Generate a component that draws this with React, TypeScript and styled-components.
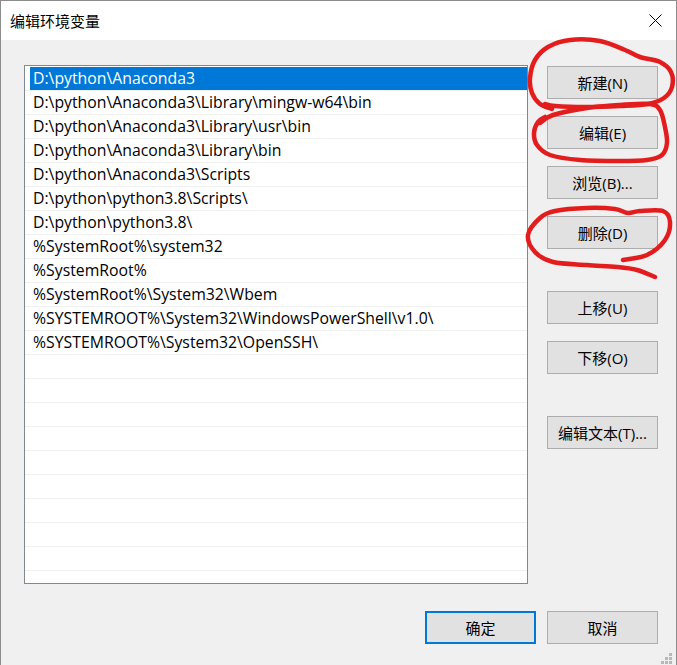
import * as React from "react";
import styled, { createGlobalStyle } from "styled-components";

const GlobalStyle = createGlobalStyle`
  html, body {
    margin: 0;
    padding: 0;
    background: #f0f0f0;
  }
  body {
    font-family: "Open Sans", "Noto Sans CJK SC", sans-serif;
  }
`;

const Window = styled.div`
  position: relative;
  width: 677px;
  height: 665px;
  box-sizing: border-box;
  border: 1px solid #8c8c8c;
  border-bottom: none;
  background: #f0f0f0;
  display: flex;
  flex-direction: column;
  overflow: hidden;
`;

const TitleBar = styled.div`
  height: 39px;
  flex: none;
  background: #ffffff;
  display: flex;
  align-items: center;
  justify-content: space-between;
  padding: 0 14px 0 9px;
  font-size: 15px;
  color: #000;
`;

const Body = styled.div`
  display: flex;
  gap: 19px;
  padding: 25px 18px 0 23px;
`;

const ListBox = styled.div`
  width: 504px;
  height: 519px;
  box-sizing: border-box;
  border: 1px solid #828790;
  background: #ffffff;
  padding-top: 1px;
  overflow: hidden;
`;

const Row = styled.div`
  height: 24px;
  box-sizing: border-box;
  border-bottom: 1px solid #f0f0f0;
  padding-left: 5px;
  display: flex;
`;

const RowLabel = styled.span<{ $selected?: boolean }>`
  flex: 1;
  padding-left: 3px;
  line-height: 23px;
  font-size: 15.8px;
  white-space: nowrap;
  color: ${(p) => (p.$selected ? "#ffffff" : "#000000")};
  background: ${(p) => (p.$selected ? "#0078d7" : "transparent")};
`;

const SideColumn = styled.div`
  display: flex;
  flex-direction: column;
  padding-top: 1px;
`;

const Button = styled.button<{ $primary?: boolean; $gap?: number }>`
  width: 111px;
  height: 33px;
  box-sizing: border-box;
  margin: ${(p) => (p.$gap ?? 0)}px 0 0 0;
  padding: 0;
  background: #e1e1e1;
  border: ${(p) => (p.$primary ? "2px solid #0078d7" : "1px solid #adadad")};
  font-family: "Open Sans", "Noto Sans CJK SC", sans-serif;
  font-size: 15px;
  color: #000;
  cursor: default;
`;

const Footer = styled.div`
  display: flex;
  justify-content: flex-end;
  gap: 11px;
  padding: 27px 18px 0 0;
`;

const Overlay = styled.svg`
  position: absolute;
  left: -1px;
  top: -1px;
  pointer-events: none;
`;

const Grip = styled.svg`
  position: absolute;
  right: 4px;
  bottom: 1px;
`;

const paths = [
  "D:\\python\\Anaconda3",
  "D:\\python\\Anaconda3\\Library\\mingw-w64\\bin",
  "D:\\python\\Anaconda3\\Library\\usr\\bin",
  "D:\\python\\Anaconda3\\Library\\bin",
  "D:\\python\\Anaconda3\\Scripts",
  "D:\\python\\python3.8\\Scripts\\",
  "D:\\python\\python3.8\\",
  "%SystemRoot%\\system32",
  "%SystemRoot%",
  "%SystemRoot%\\System32\\Wbem",
  "%SYSTEMROOT%\\System32\\WindowsPowerShell\\v1.0\\",
  "%SYSTEMROOT%\\System32\\OpenSSH\\",
];

const sideButtons = [
  { label: "新建(N)", gap: 0 },
  { label: "编辑(E)", gap: 17 },
  { label: "浏览(B)...", gap: 17 },
  { label: "删除(D)", gap: 17 },
  { label: "上移(U)", gap: 42 },
  { label: "下移(O)", gap: 17 },
  { label: "编辑文本(T)...", gap: 42 },
];

// hand-drawn marker loops, window coordinates
const loops: number[][][] = [
  [[552, 109], [540, 104], [532, 93], [530, 78], [535, 60], [548, 47], [570, 40], [600, 41], [625, 50], [640, 57], [660, 62], [671, 72], [672, 87], [664, 98], [648, 104], [620, 106], [585, 107], [555, 106], [545, 104]],
  [[540, 123], [553, 115], [587, 108], [620, 105], [650, 104], [660, 110], [665, 127], [667, 143], [662, 155], [647, 160], [620, 161], [580, 160], [550, 155], [537, 145], [534, 133], [538, 122], [545, 117]],
  [[623, 260], [647, 255], [665, 240], [670, 222], [663, 211], [640, 211], [628, 213], [615, 209], [587, 208], [555, 211], [540, 218], [528, 235], [535, 252], [553, 262], [587, 265], [617, 267], [637, 270], [655, 277]],
];

const smooth = (pts: number[][]) => {
  let d = `M${pts[0][0]},${pts[0][1]}`;
  for (let i = 0; i < pts.length - 1; i++) {
    const p0 = pts[i - 1] || pts[i];
    const p1 = pts[i];
    const p2 = pts[i + 1];
    const p3 = pts[i + 2] || p2;
    const c1x = p1[0] + (p2[0] - p0[0]) / 6;
    const c1y = p1[1] + (p2[1] - p0[1]) / 6;
    const c2x = p2[0] - (p3[0] - p1[0]) / 6;
    const c2y = p2[1] - (p3[1] - p1[1]) / 6;
    d += ` C${c1x},${c1y} ${c2x},${c2y} ${p2[0]},${p2[1]}`;
  }
  return d;
};

const CloseIcon = () => (
  <svg width="13" height="13" viewBox="0 0 13 13">
    <path d="M0.5 0.5 L12.5 12.5 M12.5 0.5 L0.5 12.5" stroke="#000" strokeWidth="1" />
  </svg>
);

const App: React.FC = () => {
  const rows = Array.from({ length: 22 }, (_, i) => paths[i] ?? "");
  return (
    <>
      <GlobalStyle />
      <Window>
        <TitleBar>
          <span>编辑环境变量</span>
          <CloseIcon />
        </TitleBar>
        <Body>
          <ListBox>
            {rows.map((text, i) => (
              <Row key={i}>
                <RowLabel $selected={i === 0}>{text}</RowLabel>
              </Row>
            ))}
          </ListBox>
          <SideColumn>
            {sideButtons.map((b) => (
              <Button key={b.label} $gap={b.gap}>
                {b.label}
              </Button>
            ))}
          </SideColumn>
        </Body>
        <Footer>
          <Button $primary>确定</Button>
          <Button>取消</Button>
        </Footer>
        <Grip width="11" height="11" viewBox="0 0 11 11">
          {[[8, 0], [4, 4], [8, 4], [0, 8], [4, 8], [8, 8]].map(([x, y]) => (
            <rect key={`${x}-${y}`} x={x} y={y} width="3" height="3" fill="#b8b8b8" />
          ))}
        </Grip>
        <Overlay width="677" height="665" viewBox="0 0 677 665">
          {loops.map((pts, i) => (
            <path
              key={i}
              d={smooth(pts)}
              fill="none"
              stroke="#e31d1d"
              strokeWidth="4.5"
              strokeLinecap="round"
              strokeLinejoin="round"
            />
          ))}
        </Overlay>
      </Window>
    </>
  );
};

export default App;
